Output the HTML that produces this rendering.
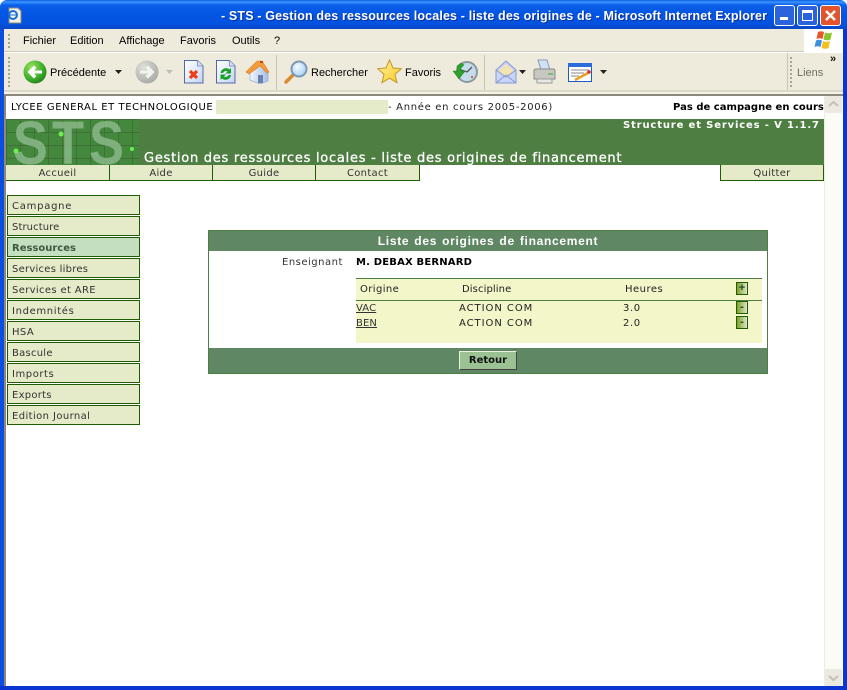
<!DOCTYPE html>
<html><head><meta charset="utf-8"><title>STS</title>
<style>
html,body{margin:0;padding:0;background:#fff}
#w{position:relative;width:847px;height:690px;overflow:hidden;background:#fff;font-family:"DejaVu Sans",sans-serif}
#w div,#w span.a,#w svg,#w a{position:absolute}
.t{white-space:nowrap;font-size:10px;line-height:12px;color:#000}
.m{white-space:nowrap;font:11px/14px "Liberation Sans",sans-serif;color:#000;top:34px}
.tb{white-space:nowrap;font:11px/14px "Liberation Sans",sans-serif;color:#000;top:66px}
.nav{top:165px;height:15px;background:#e5ebc8;border:1px solid #1f5c00;border-top:0;border-left:0;text-align:center;font-size:10px;line-height:18px;color:#333;letter-spacing:.3px}
.s{left:7px;width:131px;height:18px;background:#e5ebc8;border:1px solid #1f5c00;font-size:10px;line-height:21px;color:#333;letter-spacing:.4px;text-indent:4px;white-space:nowrap}
.btn{width:10px;height:11px;left:736px;border:1px solid #1f5c00;background:linear-gradient(90deg,#7ea21f,#dfe5cf);color:#1d4a30;font:bold 11px/11px "Liberation Sans",sans-serif;text-align:center}
a{color:#333}
</style></head><body><div id="w">
<!-- title bar -->
<div style="left:0;top:0;width:847px;height:29px;background:linear-gradient(180deg,#0a5be0 0,#3d95ff 2px,#0a5fe8 5px,#0355e3 14px,#0453e0 24px,#0a49c8 28px);border-radius:7px 7px 0 0"></div>
<div style="left:0;top:29px;width:4px;height:661px;background:#0a4de0"></div>
<div style="left:843px;top:29px;width:4px;height:661px;background:#0a35d0"></div>
<div style="left:0;top:686px;width:847px;height:4px;background:#0a35d0"></div>
<svg style="left:6px;top:7px" width="17" height="17" viewBox="0 0 17 17"><path d="M3 1h9l3 3v12H3z" fill="#f4f2e4" stroke="#8a8a78"/><circle cx="7" cy="8" r="4" fill="none" stroke="#1b6fd8" stroke-width="2"/><path d="M3 8h8" stroke="#1b6fd8"/></svg>
<div class="t" style="left:221px;top:8px;font:bold 12.5px/16px 'Liberation Sans',sans-serif;color:#fff;letter-spacing:.145px;text-shadow:1px 1px 0 #0a2f9c">- STS - Gestion des ressources locales - liste des origines de - Microsoft Internet Explorer</div>
<!-- window buttons -->
<div style="left:774px;top:5px;width:19px;height:19px;border:1px solid #fff;border-radius:3px;background:#2a63dc"></div>
<div style="left:780px;top:17px;width:8px;height:3px;background:#fff"></div>
<div style="left:797px;top:5px;width:19px;height:19px;border:1px solid #fff;border-radius:3px;background:#2a63dc"></div>
<div style="left:802px;top:10px;width:9px;height:7px;border:1px solid #fff;border-top-width:3px"></div>
<div style="left:820px;top:5px;width:19px;height:19px;border:1px solid #fff;border-radius:3px;background:#e2542c"></div>
<svg style="left:820px;top:5px" width="21" height="21"><path d="M6 6l9 9M15 6l-9 9" stroke="#fff" stroke-width="2.4"/></svg>
<!-- menu bar -->
<div style="left:4px;top:29px;width:839px;height:67px;background:#efebdc"></div>
<div style="left:4px;top:51px;width:839px;height:1px;background:#d0ccba"></div>
<div style="left:4px;top:52px;width:839px;height:1px;background:#fff"></div>
<div style="left:8px;top:34px;width:2px;height:14px;border-left:2px dotted #a8a596"></div>
<span class="a m" style="left:23px">Fichier</span>
<span class="a m" style="left:70px">Edition</span>
<span class="a m" style="left:119px">Affichage</span>
<span class="a m" style="left:180px">Favoris</span>
<span class="a m" style="left:232px">Outils</span>
<span class="a m" style="left:274px">?</span>
<div style="left:804px;top:29px;width:39px;height:23px;background:#fff"></div>
<svg style="left:814px;top:30px" width="20" height="20" viewBox="0 0 20 20"><path d="M4 2q3-1.500 6 0L8.500 9q-3-1.500-6 0z" fill="#e8562a"/><path d="M11 2.500q3 1.500 7 0L16.500 9.500q-3 1.500-7 0z" fill="#8cc42c"/><path d="M2 10.500q3-1.500 6 0L6.500 17q-3-1.500-6 0z" fill="#3f8ee0"/><path d="M9 11q3 1.500 7 0L14.500 18q-3 1.500-7 0z" fill="#f4c020"/></svg>
<!-- toolbar -->
<div style="left:8px;top:57px;width:2px;height:30px;border-left:2px dotted #a8a596"></div>
<svg style="left:23px;top:60px" width="24" height="24"><defs><radialGradient id="gb" cx=".35" cy=".3" r=".8"><stop offset="0" stop-color="#9be060"/><stop offset=".6" stop-color="#3fb02c"/><stop offset="1" stop-color="#1f7a18"/></radialGradient></defs><circle cx="12" cy="12" r="11.500" fill="url(#gb)"/><path d="M4.500 12l6.500-6.500 2.500 2.500-2.500 2.500h8v3h-8l2.500 2.500-2.500 2.500z" fill="#fff"/></svg>
<span class="a tb" style="left:50px">Précédente</span>
<svg style="left:115px;top:70px" width="7" height="5"><path d="M0 0h7L3.500 4z" fill="#222"/></svg>
<svg style="left:135px;top:60px" width="24" height="24"><defs><radialGradient id="gg" cx=".35" cy=".3" r=".8"><stop offset="0" stop-color="#e0e0dc"/><stop offset="1" stop-color="#a4a4a0"/></radialGradient></defs><circle cx="12" cy="12" r="11.500" fill="url(#gg)"/><path d="M19.500 12L13 5.500 10.500 8l2.500 2.500H5v3h8L10.500 16l2.500 2.500z" fill="#f4f4ee"/></svg>
<svg style="left:166px;top:70px" width="7" height="5"><path d="M0 0h7L3.500 4z" fill="#bbb"/></svg>
<svg style="left:184px;top:60px" width="20" height="24"><defs><linearGradient id="dc" x1="0" y1="0" x2="1" y2="1"><stop offset="0" stop-color="#fff"/><stop offset="1" stop-color="#c4d4f4"/></linearGradient></defs><path d="M.5.500h13l5.500 5.500v17H.5z" fill="url(#dc)" stroke="#5068a8"/><path d="M13.500.5v5.500h5.500" fill="#d8e0f0" stroke="#8a9ac8"/><path d="M6 11l7 7M13 11l-7 7" stroke="#ee3c14" stroke-width="3.200"/></svg>
<svg style="left:216px;top:60px" width="20" height="24"><path d="M.5.500h13l5.500 5.500v17H.5z" fill="url(#dc)" stroke="#5068a8"/><path d="M13.500.5v5.500h5.500" fill="#d8e0f0" stroke="#8a9ac8"/><path d="M4.500 13a5.500 5.500 0 0 1 9-3.500l1.500-1.500v5.500h-5.500l2-2a3 3 0 0 0-4.500 1.500zM15 15a5.500 5.500 0 0 1-9 3.500L4.500 20v-5.500H10l-2 2a3 3 0 0 0 4.500-1.500z" fill="#18a028"/></svg>
<svg style="left:245px;top:59px" width="25" height="25"><defs><linearGradient id="hw" x1="0" y1="0" x2="1" y2="0"><stop offset="0" stop-color="#f0f6ff"/><stop offset="1" stop-color="#a4c0e8"/></linearGradient></defs><path d="M5 12L15 7l8 6v9l-8 3-10-4z" fill="url(#hw)" stroke="#88a0c8" stroke-width=".6"/><path d="M1 13L12 2h5l7 11-2 1-7-7-11 8z" fill="#f49c3c" stroke="#d87c20" stroke-width=".6"/><rect x="15" y="2" width="3" height="2" fill="#c84020"/><rect x="13" y="16" width="5" height="8" fill="#6c80b0"/></svg>
<div style="left:276px;top:55px;width:1px;height:35px;background:#c8c4b2"></div>
<svg style="left:284px;top:60px" width="25" height="25"><defs><radialGradient id="ln" cx=".4" cy=".35" r=".7"><stop offset="0" stop-color="#f4faff"/><stop offset="1" stop-color="#a8d0f4"/></radialGradient></defs><path d="M2 22l8-8" stroke="#d88a30" stroke-width="3.500" stroke-linecap="round"/><circle cx="15" cy="9" r="7.500" fill="url(#ln)" stroke="#7c98b8" stroke-width="2"/></svg>
<span class="a tb" style="left:311px">Rechercher</span>
<svg style="left:377px;top:59px" width="25" height="25"><defs><linearGradient id="st" x1="0" y1="0" x2="1" y2="1"><stop offset="0" stop-color="#fff4a0"/><stop offset="1" stop-color="#f8c820"/></linearGradient></defs><path d="M12.500 1l3.500 8 8.500.7-6.500 5.500 2 8.500-7.500-4.500-7.500 4.500 2-8.500L.5 9.700 9 9z" fill="url(#st)" stroke="#c0982c"/></svg>
<span class="a tb" style="left:405px">Favoris</span>
<svg style="left:452px;top:60px" width="26" height="24"><circle cx="15" cy="12" r="10" fill="#c4dcec" stroke="#8a9aa0" stroke-width="2"/><path d="M15 12l5-5M15 12l-6-2" stroke="#555" stroke-width="1.300"/><circle cx="20" cy="17" r="1" fill="#d84020"/><path d="M1 11h4V6l4-3 3 2-3 3v3h4l-6 8z" fill="#2ea02c" stroke="#1e7a1c" stroke-width=".5"/></svg>
<div style="left:484px;top:55px;width:1px;height:35px;background:#c8c4b2"></div>
<svg style="left:495px;top:60px" width="23" height="24"><path d="M1 10L11 1l10 9v13H1z" fill="#c8d4f8" stroke="#8a9ad0"/><path d="M4 10l7-6 7 6v3l-7 4-7-4z" fill="#f4e4b0"/><path d="M1 23l10-8 10 8M1 10l10 7 10-7" fill="none" stroke="#8a9ad0"/></svg>
<svg style="left:519px;top:70px" width="7" height="5"><path d="M0 0h7L3.500 4z" fill="#222"/></svg>
<svg style="left:533px;top:59px" width="24" height="25"><path d="M5 1h9l3 10H8z" fill="#cfe0f8" stroke="#8a98b0"/><path d="M1 12q0-2 2-2h17q2 0 2 2v8H1z" fill="#c8c8c0" stroke="#888"/><path d="M4 20h15v4H4z" fill="#e8e8e4" stroke="#999"/><path d="M15 15h5" stroke="#3a3"/></svg>
<svg style="left:568px;top:63px" width="25" height="19"><rect x=".5" y=".5" width="23" height="18" fill="#fff" stroke="#1c5cc8"/><rect x="0" y="0" width="24" height="4" fill="#2a6cd8"/><path d="M3 7h18M3 10h13M3 13h8" stroke="#888"/><path d="M7 17l13-7" stroke="#e8a020" stroke-width="2.500"/><circle cx="21" cy="9" r="1.800" fill="#d83020"/></svg>
<svg style="left:600px;top:70px" width="7" height="5"><path d="M0 0h7L3.500 4z" fill="#222"/></svg>
<div style="left:787px;top:53px;width:1px;height:38px;background:#c8c4b2"></div>
<div style="left:790px;top:57px;width:2px;height:30px;border-left:2px dotted #a8a596"></div>
<span class="a tb" style="left:797px;color:#6e6e66">Liens</span>
<span class="a" style="left:830px;top:53px;font:bold 11px/12px 'Liberation Sans',sans-serif;color:#111">»</span>
<div style="left:4px;top:90px;width:839px;height:2px;background:#dcd8c6"></div>
<div style="left:4px;top:92px;width:839px;height:2px;background:#f6f4ea"></div>
<div style="left:4px;top:94px;width:839px;height:2px;background:#8d897a"></div>
<!-- content area -->
<div style="left:4px;top:96px;width:820px;height:590px;background:#fff"></div>
<div style="left:4px;top:96px;width:2px;height:590px;background:#8d897a"></div>
<!-- scrollbar -->
<div style="left:824px;top:96px;width:19px;height:590px;background:#fcfcf6;border-left:1px solid #ecebe4;box-sizing:border-box"></div>
<div style="left:825px;top:96px;width:17px;height:17px;background:#eceae0;border-radius:2px"></div>
<svg style="left:825px;top:96px" width="17" height="17"><path d="M4 10l4.500-4 4.500 4" fill="none" stroke="#c4c2b8" stroke-width="2"/></svg>
<div style="left:825px;top:669px;width:17px;height:17px;background:#eceae0;border-radius:2px"></div>
<svg style="left:825px;top:669px" width="17" height="17"><path d="M4 7l4.500 4 4.500-4" fill="none" stroke="#c4c2b8" stroke-width="2"/></svg>
<!-- top line -->
<div class="t" style="left:11px;top:102px;letter-spacing:.55px">LYCEE GENERAL ET TECHNOLOGIQUE</div>
<div style="left:216px;top:100px;width:172px;height:14px;background:#e5ebc8"></div>
<div class="t" style="left:388px;top:102px;letter-spacing:.69px;color:#222">- Année en cours 2005-2006)</div>
<div class="t" style="left:673px;top:102px;font-weight:bold;letter-spacing:.02px">Pas de campagne en cours</div>
<!-- header -->
<div style="left:6px;top:119px;width:818px;height:46px;background:#4e7e42"></div>
<svg style="left:6px;top:119px" width="133" height="46"><defs><pattern id="g" width="14" height="13" patternUnits="userSpaceOnUse"><rect width="14" height="13" fill="#43883c"/><path d="M0 .5h14M.5 0v13" stroke="#3f7035" stroke-width="1"/></pattern></defs><rect width="133" height="46" fill="url(#g)"/><g transform="scale(.86 1)" font-family="Liberation Sans" font-weight="bold" font-size="61" fill="#8ab78a" opacity=".85"><text x="8" y="45">S</text><text x="53.500" y="45">T</text><text x="96.500" y="45">S</text></g><circle cx="55" cy="15" r="2.500" fill="#6cf050"/><circle cx="10" cy="32" r="2.500" fill="#6cf050"/><circle cx="126" cy="30" r="2" fill="#6cf050"/></svg>
<div class="t" style="left:623px;top:120px;font-weight:bold;font-size:10px;letter-spacing:.85px;color:#fff">Structure et Services - V 1.1.7</div>
<div class="t" style="left:144px;top:151px;font-size:13px;line-height:15px;letter-spacing:.74px;color:#fff;-webkit-text-stroke:.3px #fff">Gestion des ressources locales - liste des origines de financement</div>
<!-- nav -->
<div class="nav" style="left:6px;width:103px;border-left:0">Accueil</div>
<div class="nav" style="left:110px;width:102px">Aide</div>
<div class="nav" style="left:213px;width:102px">Guide</div>
<div class="nav" style="left:316px;width:103px">Contact</div>
<div style="left:109px;top:165px;width:1px;height:16px;background:#1f5c00"></div>
<div style="left:212px;top:165px;width:1px;height:16px;background:#1f5c00"></div>
<div style="left:315px;top:165px;width:1px;height:16px;background:#1f5c00"></div>
<div class="nav" style="left:720px;width:102px;border-left:1px solid #1f5c00">Quitter</div>
<!-- side -->
<div class="s" style="top:195px;letter-spacing:.75px">Campagne</div>
<div class="s" style="top:216px;letter-spacing:.1px">Structure</div>
<div class="s" style="top:237px;background:#c3dfc0;font-weight:bold;letter-spacing:0;color:#3c5a40">Ressources</div>
<div class="s" style="top:258px;letter-spacing:.25px">Services libres</div>
<div class="s" style="top:279px;letter-spacing:.35px">Services et ARE</div>
<div class="s" style="top:300px;letter-spacing:.65px">Indemnités</div>
<div class="s" style="top:321px">HSA</div>
<div class="s" style="top:342px;letter-spacing:.25px">Bascule</div>
<div class="s" style="top:363px;letter-spacing:.55px">Imports</div>
<div class="s" style="top:384px;letter-spacing:.25px">Exports</div>
<div class="s" style="top:405px;letter-spacing:.4px">Edition Journal</div>
<!-- panel -->
<div style="left:208px;top:230px;width:558px;height:142px;border:1px solid #4e7e42;background:#fff"></div>
<div style="left:209px;top:231px;width:558px;height:20px;background:#5f8763"></div>
<div style="left:209px;top:231px;width:558px;text-align:center;color:#fff;font-weight:bold;font-size:12px;line-height:21px;letter-spacing:0;white-space:nowrap;font-family:'Liberation Sans',sans-serif;word-spacing:1px;"><span style="letter-spacing:.7px">Liste des origines de financement</span></div>
<div style="left:209px;top:348px;width:558px;height:25px;background:#5f8763"></div>
<div class="t" style="left:282px;top:257px;color:#333;letter-spacing:.5px">Enseignant</div>
<div class="t" style="left:356px;top:257px;font-weight:bold;letter-spacing:.18px">M. DEBAX BERNARD</div>
<div style="left:356px;top:278px;width:406px;height:65px;background:#f3f6c9"></div>
<div style="left:356px;top:278px;width:406px;height:1px;background:#4e7e42"></div>
<div style="left:356px;top:300px;width:406px;height:1px;background:#4e7e42"></div>
<div class="t" style="left:360px;top:284px;letter-spacing:.4px;color:#222">Origine</div>
<div class="t" style="left:462px;top:284px;letter-spacing:.1px;color:#222">Discipline</div>
<div class="t" style="left:625px;top:284px;letter-spacing:.5px;color:#222">Heures</div>
<div class="btn" style="top:282px">+</div>
<a class="t" style="left:356px;top:303px;color:#333;letter-spacing:.1px;text-decoration:underline">VAC</a>
<div class="t" style="left:459px;top:303px;letter-spacing:.95px;color:#222">ACTION COM</div>
<div class="t" style="left:623px;top:303px;letter-spacing:.6px;color:#222">3.0</div>
<div class="btn" style="top:301px">-</div>
<a class="t" style="left:356px;top:318px;color:#333;letter-spacing:.1px;text-decoration:underline">BEN</a>
<div class="t" style="left:459px;top:318px;letter-spacing:.95px;color:#222">ACTION COM</div>
<div class="t" style="left:623px;top:318px;letter-spacing:.6px;color:#222">2.0</div>
<div class="btn" style="top:316px">-</div>
<div style="left:459px;top:351px;width:56px;height:17px;background:#9cc293;border:1px solid;border-color:#e8f0e0 #444 #444 #e8f0e0;text-align:center;font-weight:bold;font-size:10px;line-height:18px;color:#111">Retour</div>
</div></body></html>
